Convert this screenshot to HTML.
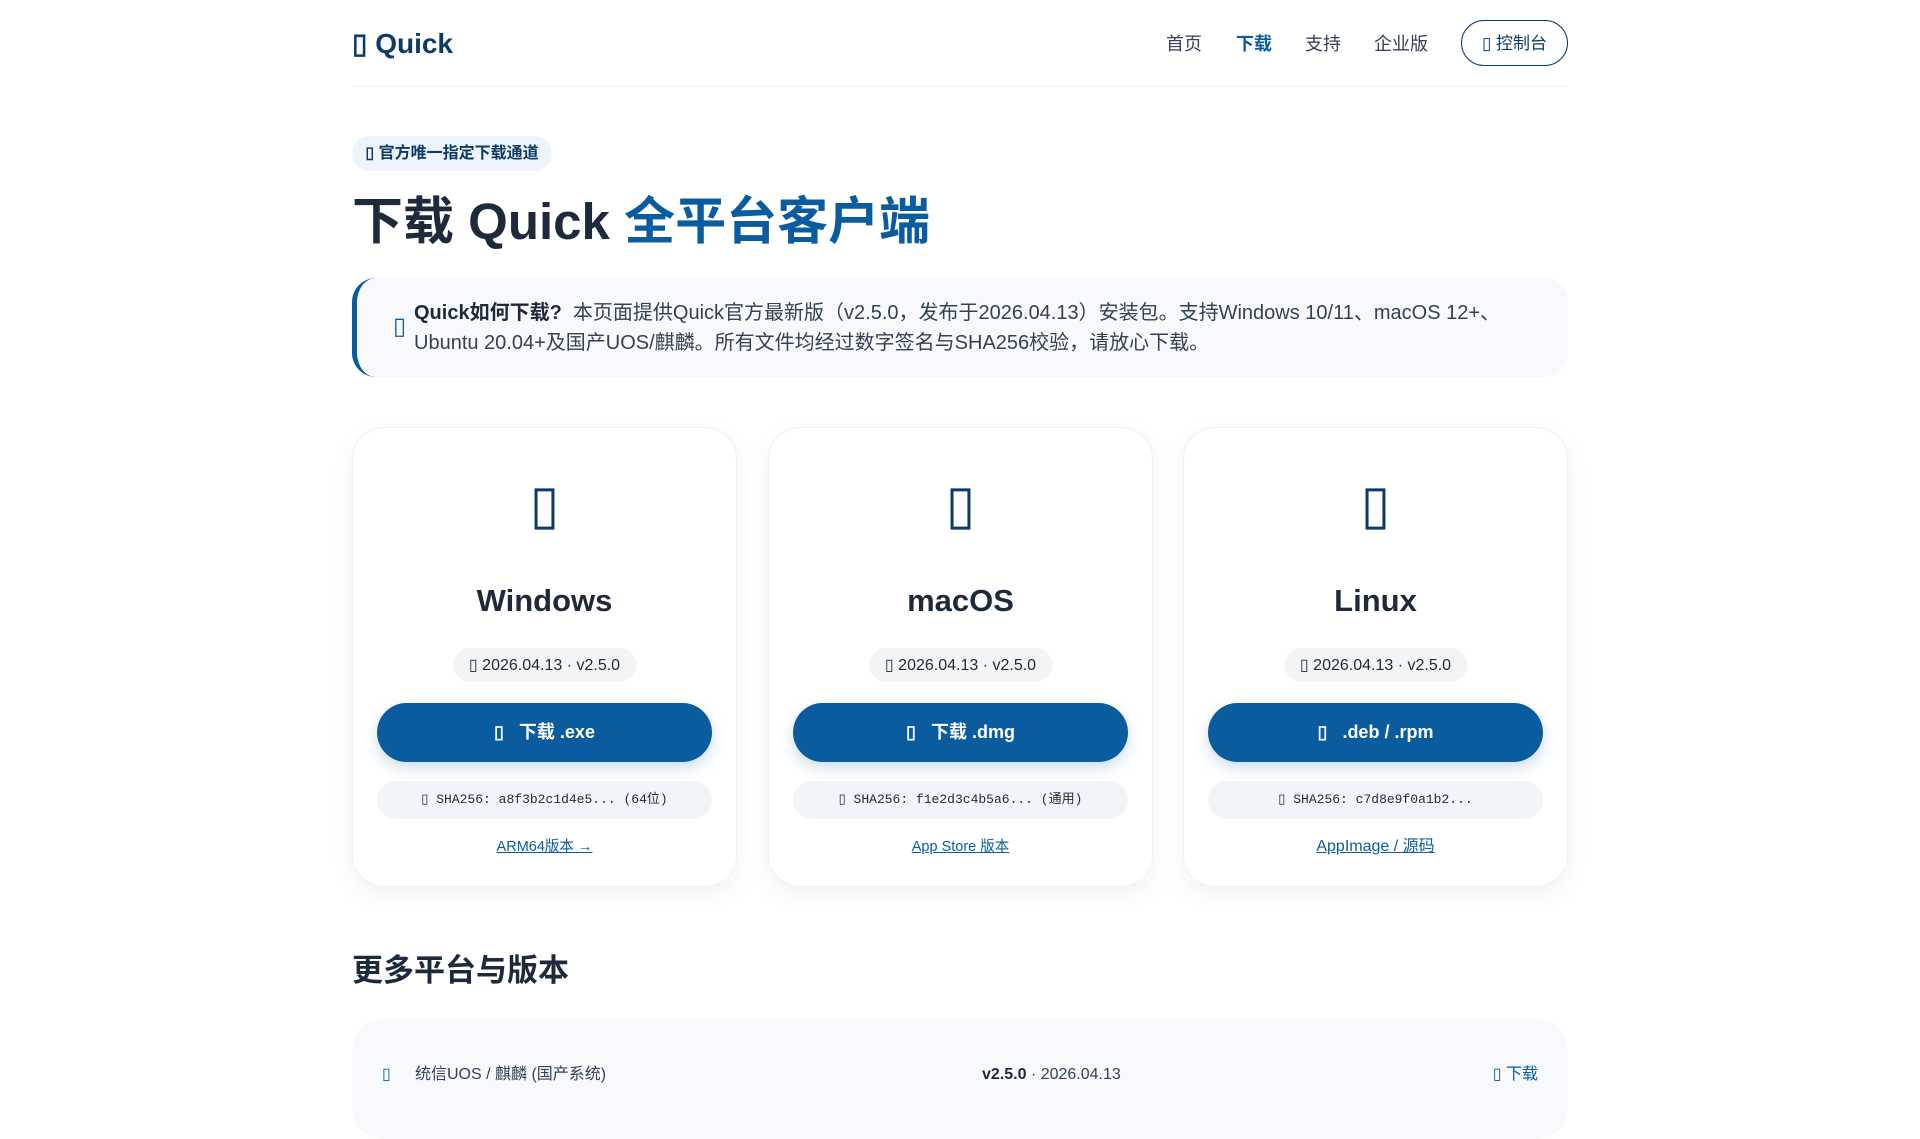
<!DOCTYPE html>
<html><head><meta charset="utf-8"><style>
*{box-sizing:border-box;margin:0;padding:0}
body{width:1920px;height:1080px;overflow:hidden;background:#fff;font-family:"Liberation Sans","Noto Sans CJK SC",sans-serif;color:#1e293b}
.c{position:absolute;left:352px;width:1216px}
.hdr{top:0;height:87px;border-bottom:1px solid #eef0f3}
.logo{position:absolute;left:0;top:27px;font-size:28px;font-weight:bold;color:#0d3a66}
.nav{position:absolute;top:30px;font-size:18px;color:#334155}
.btn1{position:absolute;left:1109px;top:20px;width:107px;height:46px;border:1px solid #0d3a66;border-radius:23px;font-size:17px;color:#0d3a66;text-align:center;line-height:45px}
.badge{position:absolute;left:352px;top:136px;width:200px;height:35px;border-radius:18px;background:#eef4fb;color:#0d3a66;font-size:16px;font-weight:bold;line-height:36px;text-align:center}
h1{position:absolute;left:352px;top:180px;font-size:51px;font-weight:bold;color:#1e293b;white-space:nowrap}
h1 span{color:#0b5c9e}
.info{top:278px;height:99px;background:#f7f9fc;border-left:5px solid #0b5c9e;border-radius:24px}
.info .ic{position:absolute;left:36px;top:34px;font-size:24px;color:#0b5c9e}
.info p{position:absolute;left:57px;top:20px;width:1120px;font-size:20px;line-height:30px;color:#334155}
.card{position:absolute;top:427px;width:385px;height:460px;border:1px solid #f0f1f3;border-radius:32px;background:#fff;box-shadow:0 8px 24px rgba(15,23,42,.05);text-align:center}
.card .i{position:absolute;left:0;right:0;top:45px;font-size:54px;color:#0d3a66}
.card h2{position:absolute;left:0;right:0;top:155px;font-size:31px;font-weight:bold;color:#1e293b}
.pill{position:absolute;left:50%;transform:translateX(-50%);top:220px;height:34px;padding:0 16px;border-radius:17px;background:#f3f4f6;font-size:16px;line-height:35px;color:#1e293b;white-space:nowrap}
.dl{position:absolute;left:24px;right:24px;top:275px;height:59px;border-radius:30px;background:#0b5c9e;color:#fff;font-size:18px;font-weight:bold;line-height:59px;box-shadow:0 6px 14px rgba(11,92,158,.2)}
.sha{position:absolute;left:24px;right:24px;top:353px;height:38px;border-radius:19px;background:#f1f4f8;font-family:"Liberation Mono","Noto Sans CJK SC",monospace;font-size:13px;line-height:38px;color:#1e293b}
.lnk{position:absolute;left:0;right:0;top:407px;font-size:14.5px;color:#0b5c9e;text-decoration:underline}
h3{position:absolute;left:352px;top:945px;font-size:31px;font-weight:bold;color:#1e293b}
.more{top:1019px;height:120px;background:#f7f9fc;border-radius:32px}
.more span{position:absolute;top:46px;font-size:16px;line-height:20px;color:#334155}
</style></head><body>
<div class="c hdr">
<div class="logo">▯ Quick</div>
<div class="nav" style="left:814px">首页</div>
<div class="nav" style="left:884px;color:#0b5c9e;font-weight:bold">下载</div>
<div class="nav" style="left:953px">支持</div>
<div class="nav" style="left:1022px">企业版</div>
<div class="btn1">▯ 控制台</div>
</div>
<div class="badge">▯ 官方唯一指定下载通道</div>
<h1>下载 Quick <span>全平台客户端</span></h1>
<div class="c info"><div class="ic">▯</div><p><b style="color:#1e293b">Quick如何下载?</b>&nbsp; 本页面提供Quick官方最新版（v2.5.0，发布于2026.04.13）安装包。支持Windows 10/11、macOS 12+、Ubuntu 20.04+及国产UOS/麒麟。所有文件均经过数字签名与SHA256校验，请放心下载。</p></div>

<div class="card" style="left:352px"><div class="i">▯</div><h2>Windows</h2><div class="pill">▯ 2026.04.13 · v2.5.0</div><div class="dl">▯&nbsp;&nbsp; 下载 .exe</div><div class="sha">▯ SHA256: a8f3b2c1d4e5... (64位)</div><div class="lnk">ARM64版本 →</div></div>
<div class="card" style="left:768px"><div class="i">▯</div><h2>macOS</h2><div class="pill">▯ 2026.04.13 · v2.5.0</div><div class="dl">▯&nbsp;&nbsp; 下载 .dmg</div><div class="sha">▯ SHA256: f1e2d3c4b5a6... (通用)</div><div class="lnk">App Store 版本</div></div>
<div class="card" style="left:1183px"><div class="i">▯</div><h2>Linux</h2><div class="pill">▯ 2026.04.13 · v2.5.0</div><div class="dl">▯&nbsp;&nbsp; .deb / .rpm</div><div class="sha">▯ SHA256: c7d8e9f0a1b2...</div><div class="lnk" style="font-size:16px;top:404px">AppImage / 源码</div></div>

<h3>更多平台与版本</h3>
<div class="c more">
<span style="left:30px;color:#0b5c9e">▯</span>
<span style="left:63px">统信UOS / 麒麟 (国产系统)</span>
<span style="left:630px"><b style="color:#1e293b">v2.5.0</b> · 2026.04.13</span>
<span style="right:30px;color:#0b5c9e">▯ 下载</span>
</div>
</body></html>
